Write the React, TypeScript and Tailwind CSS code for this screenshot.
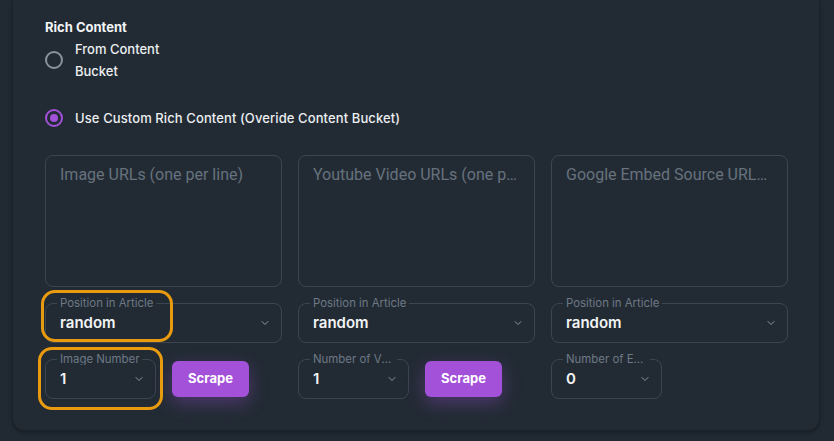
import { ChevronDown } from "lucide-react";

const font = { fontFamily: "Inter, 'Noto Sans', sans-serif" };

type SelectProps = { label: string; value: string; wide?: boolean };

const OutlinedSelect = ({ label, value, wide }: SelectProps) => (
	<fieldset
		className={`min-w-0 rounded-lg border border-[#3b4651] px-[11px] ${wide ? "w-full" : "w-[111px] shrink-0"}`}
	>
		<legend className="max-w-full truncate pr-[3px] pl-[3px] text-[11.4px] leading-[12px] text-[#6e7985]">
			{label}
		</legend>
		<div className="flex h-[33px] items-center justify-between pb-[5px] pl-[3px]">
			<span className="text-[15px] font-semibold text-[#f2f3f5]">{value}</span>
			<ChevronDown className="mr-[-1px] size-[12px] text-[#8b95a0]" strokeWidth={2} />
		</div>
	</fieldset>
);

const ScrapeButton = () => (
	<button className="mt-[8px] h-[36px] w-[77px] shrink-0 rounded-md bg-[#a351d9] text-[13px] font-bold text-white shadow-[0_6px_18px_rgba(163,81,217,0.35)]">
		Scrape
	</button>
);

type ColumnProps = { placeholder: string; numberLabel: string; numberValue: string; scrape?: boolean };

const Column = ({ placeholder, numberLabel, numberValue, scrape }: ColumnProps) => (
	<div className="flex min-w-0 flex-col">
		<div className="h-[132px] rounded-lg border border-[#3b4651] px-[14px] pt-[8px]">
			<p
				className="truncate text-[16px] leading-[22px] text-[#67727d]"
				style={{ fontFamily: "Roboto, sans-serif" }}
			>
				{placeholder}
			</p>
		</div>
		<div className="mt-[10px]">
			<OutlinedSelect label="Position in Article" value="random" wide />
		</div>
		<div className="mt-[10px] flex gap-[16px]">
			<OutlinedSelect label={numberLabel} value={numberValue} />
			{scrape && <ScrapeButton />}
		</div>
	</div>
);

export default function App() {
	return (
		<div className="relative h-[441px] w-[834px] overflow-hidden bg-[#212a33]" style={font}>
			<div className="ml-[12px] h-[431px] w-[808px] rounded-b-xl border-r border-b border-l border-[#1a2128] bg-[#222b34] pt-[18px] pl-[32px] shadow-[0_2px_4px_rgba(0,0,0,0.25)]">
				<h3 className="text-[13px] leading-[18px] font-bold text-[#f3f4f6]">Rich Content</h3>

				<div className="mt-[2px] flex items-center gap-[12px]">
					<span className="size-[18px] rounded-full border-2 border-[#89939d]" />
					<span className="max-w-[100px] text-[13px] leading-[22px] font-medium text-[#eceef0]">
						From Content Bucket
					</span>
				</div>

				<div className="mt-[25px] flex items-center gap-[12px]">
					<span className="flex size-[18px] items-center justify-center rounded-full border-2 border-[#a351d9]">
						<span className="size-[8px] rounded-full bg-[#a351d9]" />
					</span>
					<span className="text-[13px] leading-[22px] font-medium tracking-[0.1px] text-[#eceef0]">
						Use Custom Rich Content (Overide Content Bucket)
					</span>
				</div>

				<div className="mt-[26px] grid w-[743px] grid-cols-3 gap-[16px]">
					<Column placeholder="Image URLs (one per line)" numberLabel="Image Number" numberValue="1" scrape />
					<Column placeholder="Youtube Video URLs (one per line)" numberLabel="Number of Videos" numberValue="1" scrape />
					<Column placeholder="Google Embed Source URLs (one per line)" numberLabel="Number of Embeds" numberValue="0" />
				</div>
			</div>

			{/* highlight rings */}
			<div className="pointer-events-none absolute top-[290px] left-[41px] h-[52px] w-[132px] rounded-[14px] border-[3px] border-[#e99b10]" />
			<div className="pointer-events-none absolute top-[347px] left-[38px] h-[63px] w-[125px] rounded-[14px] border-[3px] border-[#e99b10]" />
		</div>
	);
}
